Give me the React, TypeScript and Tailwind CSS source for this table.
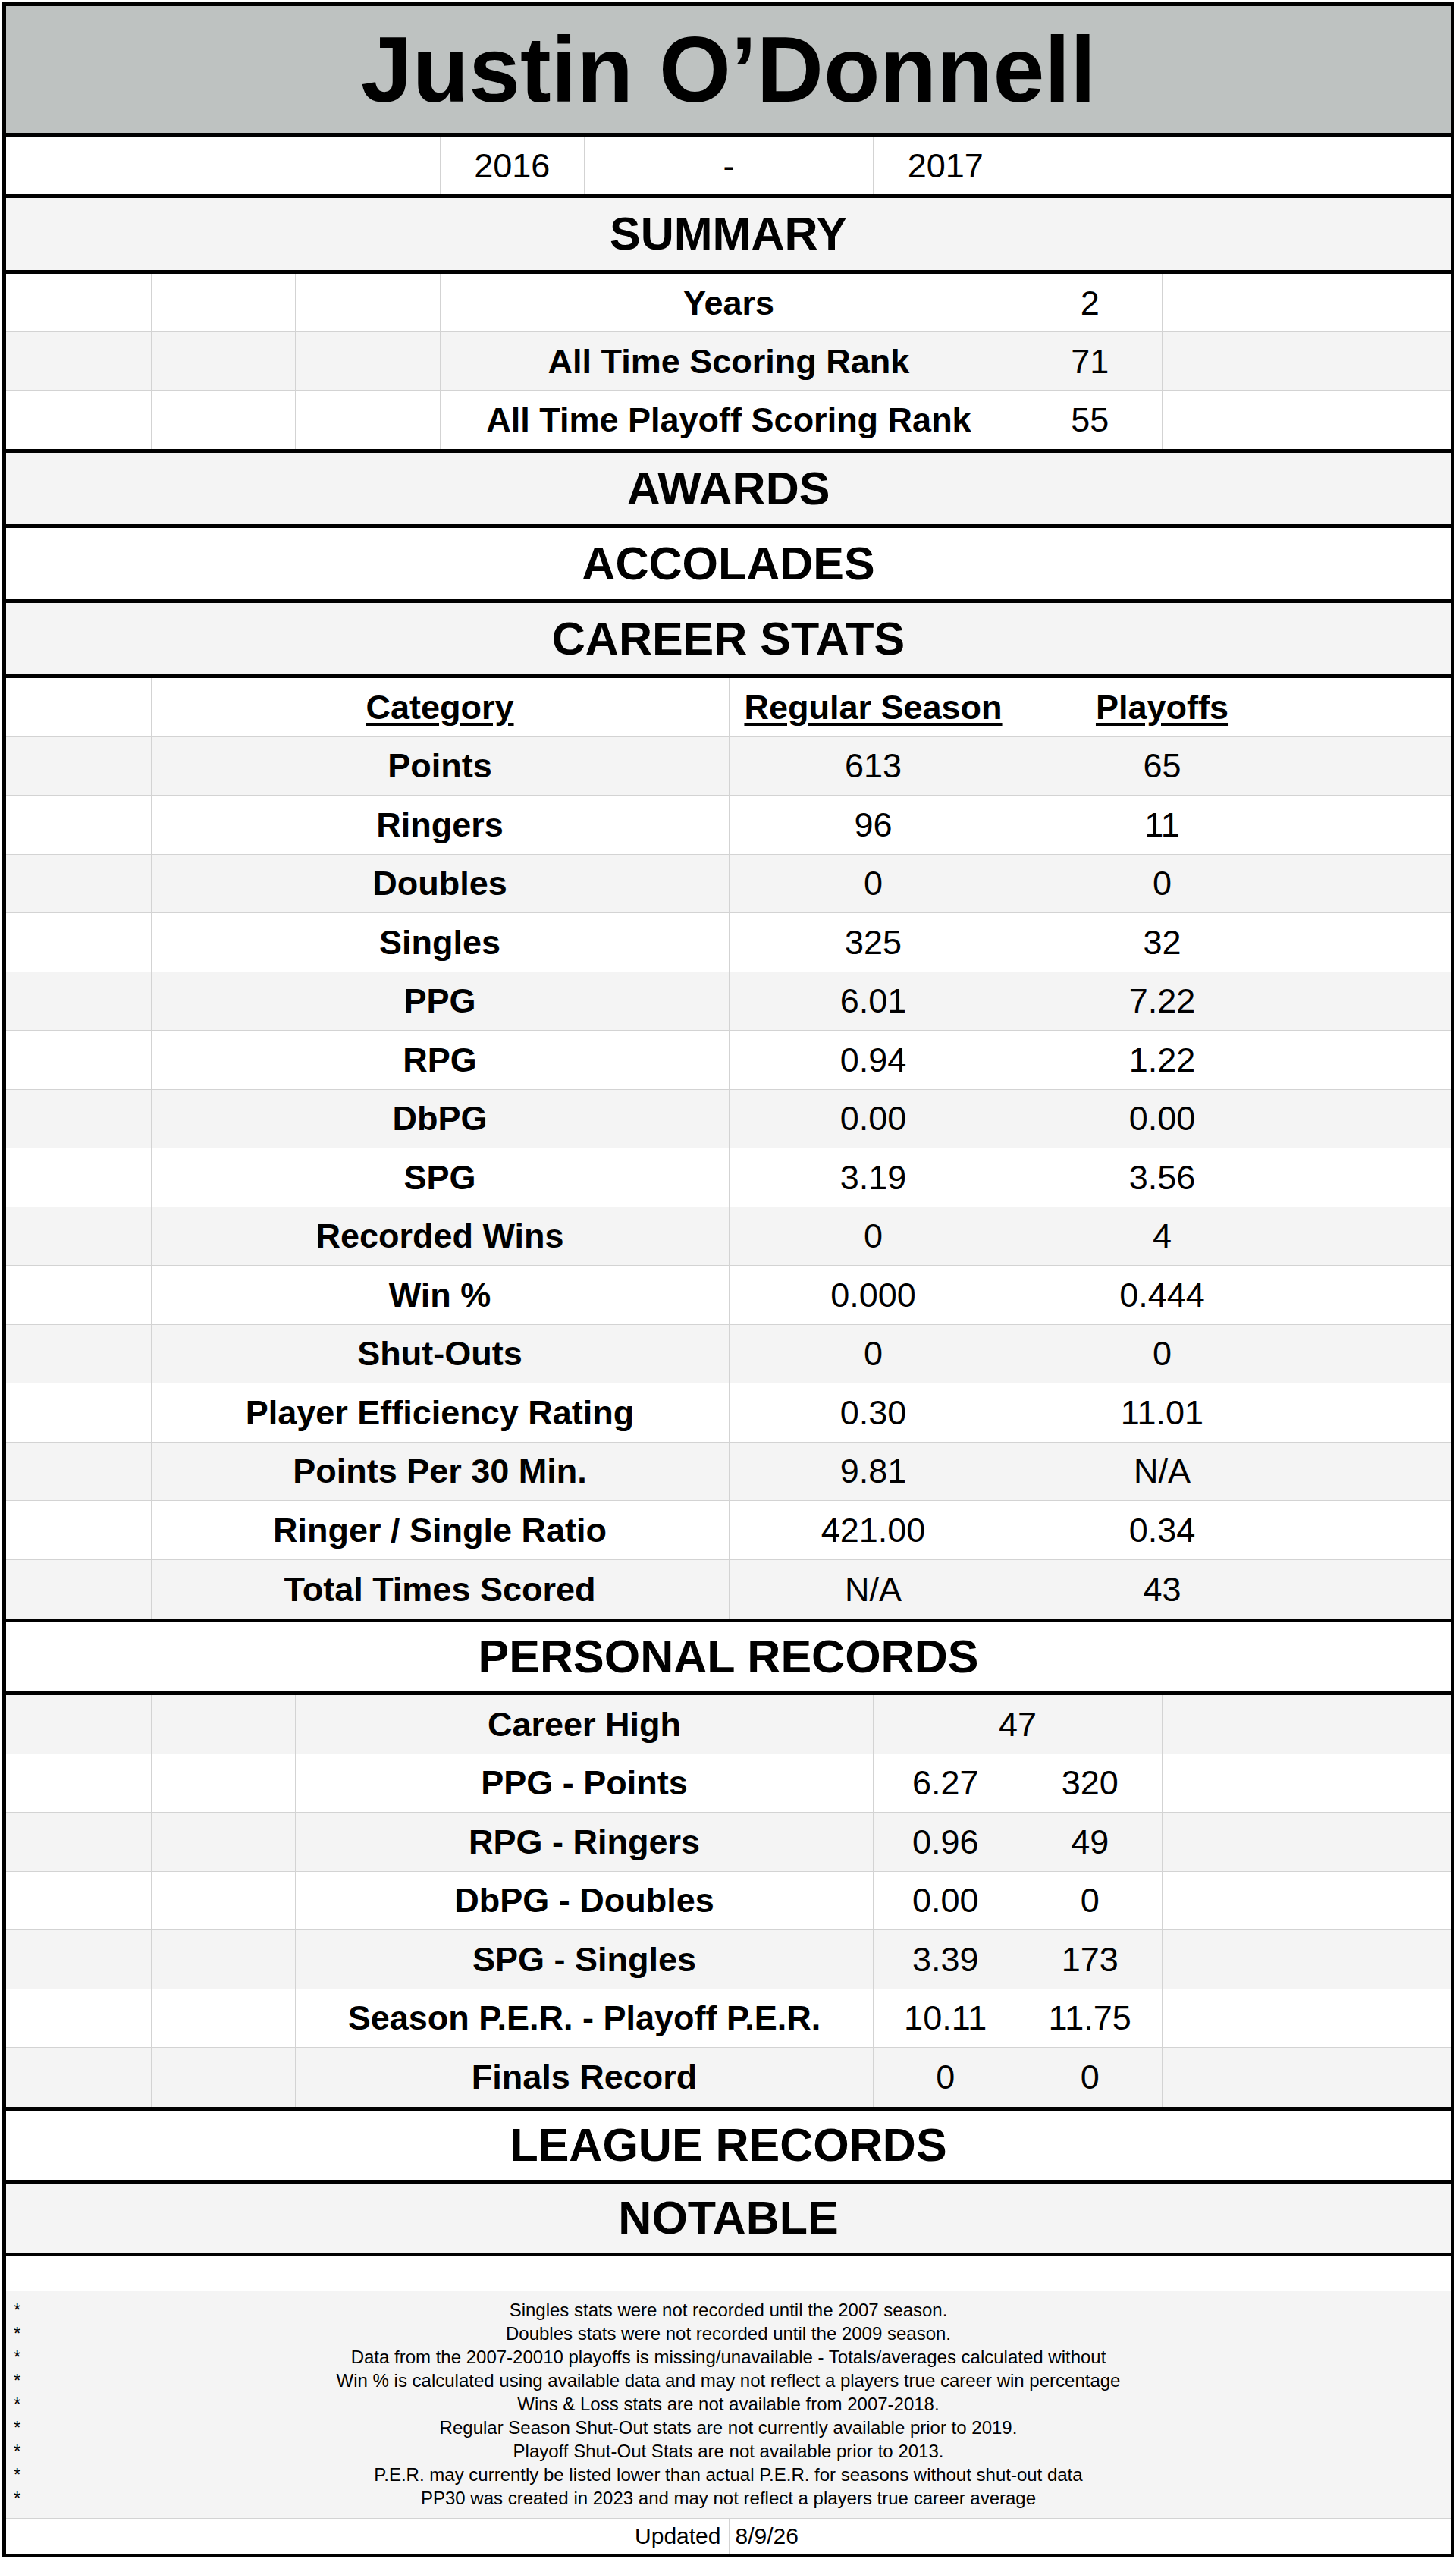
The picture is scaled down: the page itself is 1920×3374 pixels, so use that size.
import * as React from "react";

type CellDef = {
  span: 1 | 2 | 3 | 4;
  text?: string;
  bold?: boolean;
  underline?: boolean;
};

const spanClass: Record<number, string> = {
  1: "col-span-1",
  2: "col-span-2",
  3: "col-span-3",
  4: "col-span-4",
};

const summary = [
  { label: "Years", value: "2" },
  { label: "All Time Scoring Rank", value: "71" },
  { label: "All Time Playoff Scoring Rank", value: "55" },
];

const career = [
  { label: "Points", reg: "613", po: "65" },
  { label: "Ringers", reg: "96", po: "11" },
  { label: "Doubles", reg: "0", po: "0" },
  { label: "Singles", reg: "325", po: "32" },
  { label: "PPG", reg: "6.01", po: "7.22" },
  { label: "RPG", reg: "0.94", po: "1.22" },
  { label: "DbPG", reg: "0.00", po: "0.00" },
  { label: "SPG", reg: "3.19", po: "3.56" },
  { label: "Recorded Wins", reg: "0", po: "4" },
  { label: "Win %", reg: "0.000", po: "0.444" },
  { label: "Shut-Outs", reg: "0", po: "0" },
  { label: "Player Efficiency Rating", reg: "0.30", po: "11.01" },
  { label: "Points Per 30 Min.", reg: "9.81", po: "N/A" },
  { label: "Ringer / Single Ratio", reg: "421.00", po: "0.34" },
  { label: "Total Times Scored", reg: "N/A", po: "43" },
];

const personal = [
  { label: "PPG - Points", a: "6.27", b: "320" },
  { label: "RPG - Ringers", a: "0.96", b: "49" },
  { label: "DbPG - Doubles", a: "0.00", b: "0" },
  { label: "SPG - Singles", a: "3.39", b: "173" },
  { label: "Season P.E.R. - Playoff P.E.R.", a: "10.11", b: "11.75" },
  { label: "Finals Record", a: "0", b: "0" },
];

const notes = [
  "Singles stats were not recorded until the 2007 season.",
  "Doubles stats were not recorded until the 2009 season.",
  "Data from the 2007-20010 playoffs is missing/unavailable - Totals/averages calculated without",
  "Win % is calculated using available data and may not reflect a players true career win percentage",
  "Wins & Loss stats are not available from 2007-2018.",
  "Regular Season Shut-Out stats are not currently available prior to 2019.",
  "Playoff Shut-Out Stats are not available prior to 2013.",
  "P.E.R. may currently be listed lower than actual P.E.R. for seasons without shut-out data",
  "PP30 was created in 2023 and may not reflect a players true career average",
];

const GridRow = ({
  cells,
  shaded,
  height = "h-[77.5px]",
}: {
  cells: CellDef[];
  shaded?: boolean;
  height?: string;
}) => {
  return (
    <div
      className={`grid grid-cols-10 ${height} border-b border-[#d3d3d3] last:border-b-0 ${
        shaded ? "bg-[#f4f4f4]" : "bg-white"
      }`}
    >
      {cells.map((c, i) => (
        <div
          key={i}
          className={`${spanClass[c.span]} flex items-center justify-center ${
            i > 0 ? "border-l border-[#d3d3d3]" : ""
          } ${c.bold ? "font-bold" : "font-normal"} ${c.underline ? "underline underline-offset-[5px]" : ""}`}
        >
          {c.text}
        </div>
      ))}
    </div>
  );
};

const SectionHeader = ({
  title,
  shaded,
  height,
}: {
  title: string;
  shaded?: boolean;
  height: string;
}) => {
  return (
    <div
      className={`${height} flex items-center justify-center border-b-[5px] border-black text-[61px] font-bold ${
        shaded ? "bg-[#f4f4f4]" : "bg-white"
      }`}
    >
      {title}
    </div>
  );
};

export default function App() {
  return (
    <div className="bg-white pt-[3px] pl-[3px] pb-[2px] font-['Liberation_Sans',Arial,sans-serif] text-black text-[45px] leading-none">
      <div className="w-[1915px] border-[5px] border-black">
        {/* Name */}
        <div className="h-[173px] bg-[#bec2c1] border-b-[5px] border-black flex items-center justify-center text-[122px] font-bold">
          Justin O’Donnell
        </div>

        {/* Year span */}
        <div className="border-b-[5px] border-black">
          <GridRow
            height="h-[75px]"
            cells={[
              { span: 3 },
              { span: 1, text: "2016" },
              { span: 2, text: "-" },
              { span: 1, text: "2017" },
              { span: 3 },
            ]}
          />
        </div>

        <SectionHeader title="SUMMARY" shaded height="h-[100px]" />
        <div className="border-b-[5px] border-black">
          {summary.map((s, i) => (
            <GridRow
              key={s.label}
              height="h-[77px]"
              shaded={i % 2 === 1}
              cells={[
                { span: 1 },
                { span: 1 },
                { span: 1 },
                { span: 4, text: s.label, bold: true },
                { span: 1, text: s.value },
                { span: 1 },
                { span: 1 },
              ]}
            />
          ))}
        </div>

        <SectionHeader title="AWARDS" shaded height="h-[99px]" />
        <SectionHeader title="ACCOLADES" height="h-[99px]" />
        <SectionHeader title="CAREER STATS" shaded height="h-[99px]" />

        {/* Career stats table */}
        <div className="border-b-[5px] border-black">
          <GridRow
            cells={[
              { span: 1 },
              { span: 4, text: "Category", bold: true, underline: true },
              { span: 2, text: "Regular Season", bold: true, underline: true },
              { span: 2, text: "Playoffs", bold: true, underline: true },
              { span: 1 },
            ]}
          />
          {career.map((c, i) => (
            <GridRow
              key={c.label}
              shaded={i % 2 === 0}
              cells={[
                { span: 1 },
                { span: 4, text: c.label, bold: true },
                { span: 2, text: c.reg },
                { span: 2, text: c.po },
                { span: 1 },
              ]}
            />
          ))}
        </div>

        <SectionHeader title="PERSONAL RECORDS" height="h-[96px]" />
        <div className="border-b-[5px] border-black">
          <GridRow
            shaded
            cells={[
              { span: 1 },
              { span: 1 },
              { span: 4, text: "Career High", bold: true },
              { span: 2, text: "47" },
              { span: 1 },
              { span: 1 },
            ]}
          />
          {personal.map((p, i) => (
            <GridRow
              key={p.label}
              shaded={i % 2 === 1}
              cells={[
                { span: 1 },
                { span: 1 },
                { span: 4, text: p.label, bold: true },
                { span: 1, text: p.a },
                { span: 1, text: p.b },
                { span: 1 },
                { span: 1 },
              ]}
            />
          ))}
        </div>

        <SectionHeader title="LEAGUE RECORDS" height="h-[96px]" />
        <SectionHeader title="NOTABLE" shaded height="h-[96px]" />

        {/* Blank spacer row */}
        <div className="h-[46px] bg-white border-b border-[#d3d3d3]" />

        {/* Footnotes */}
        <div className="bg-[#f4f4f4] py-[10px] border-b border-[#d3d3d3] text-[24px]">
          {notes.map((n) => (
            <div key={n} className="grid grid-cols-[40px_1fr_40px] h-[31px] items-center">
              <span className="pl-[10px]">*</span>
              <span className="text-center whitespace-nowrap">{n}</span>
              <span />
            </div>
          ))}
        </div>

        {/* Updated */}
        <div className="grid grid-cols-2 h-[46px] bg-white text-[30px]">
          <div className="flex items-center justify-end pr-[10px]">Updated</div>
          <div className="flex items-center pl-[8px] border-l border-[#d3d3d3]">8/9/26</div>
        </div>
      </div>
    </div>
  );
}
